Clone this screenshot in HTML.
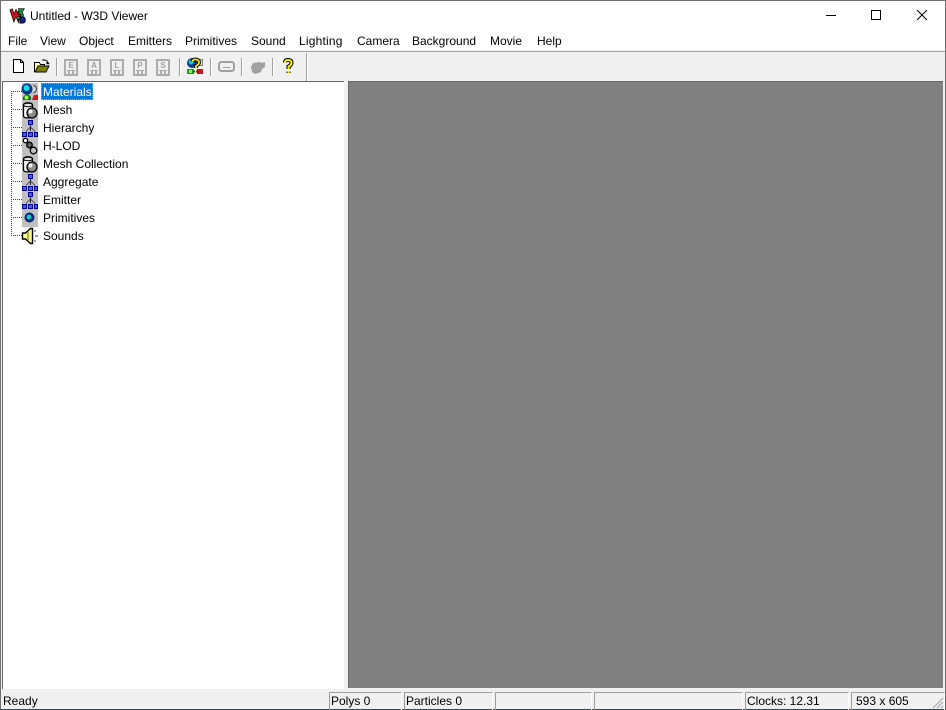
<!DOCTYPE html>
<html><head><meta charset="utf-8"><style>
html,body{margin:0;padding:0;background:#f0f0f0}
body{width:946px;height:710px;position:relative;overflow:hidden;font:12px "Liberation Sans",sans-serif;color:#000}
.a{position:absolute}
.t{position:absolute;white-space:nowrap;line-height:16px}
.sep{position:absolute;top:58px;width:1px;height:18px;background:#a0a0a0;border-right:1px solid #fff}
.p{position:absolute;top:692px;height:17px;border-left:1px solid #a0a0a0;border-top:1px solid #a0a0a0;border-right:1px solid #fff}
</style></head><body>
<div class="a" style="left:0;top:0;width:946px;height:50px;background:#fff"></div>
<div class="a" style="left:0;top:50px;width:946px;height:1px;background:#f0f0f0"></div>
<div class="a" style="left:0;top:51px;width:946px;height:1px;background:#a0a0a0"></div>
<div class="a" style="left:0;top:0;width:946px;height:1px;background:#707070"></div>
<div class="a" style="left:0;top:0;width:1px;height:710px;background:#707070"></div>
<div class="a" style="left:945px;top:0;width:1px;height:710px;background:#707070"></div>
<div class="a" style="left:0;top:709px;width:946px;height:1px;background:#24505f"></div>

<svg class="a" style="left:9px;top:7px" width="18" height="18" viewBox="0 0 18 18">
<path d="M2 2l3 9 2-5 2 5 2-9" fill="none" stroke="#000" stroke-width="3.4"/>
<path d="M2 2l3 9 2-5 2 5 2-9" fill="none" stroke="#d81020" stroke-width="2"/>
<path d="M9 3h4l-2 3c3 0 3 5-1 5H8" fill="none" stroke="#000" stroke-width="3.2"/>
<path d="M9 3h4l-2 3c3 0 3 5-1 5H8" fill="none" stroke="#10a040" stroke-width="1.8"/>
<path d="M11 10h3c3 0 3 6 0 6h-3z" fill="#1020b0" stroke="#000" stroke-width="1"/>
</svg>
<div class="t" style="left:30px;top:8px;color:#000">Untitled - W3D Viewer</div>

<div class="a" style="left:826px;top:15px;width:10px;height:1px;background:#000"></div>
<div class="a" style="left:871px;top:10px;width:8px;height:8px;border:1px solid #000"></div>
<svg class="a" style="left:916px;top:9px" width="12" height="12" viewBox="0 0 12 12"><path d="M1 1l10 10M11 1L1 11" stroke="#000" stroke-width="1" fill="none"/></svg>

<div class="t" style="left:8px;top:33px">File</div>
<div class="t" style="left:40px;top:33px">View</div>
<div class="t" style="left:79px;top:33px">Object</div>
<div class="t" style="left:128px;top:33px">Emitters</div>
<div class="t" style="left:185px;top:33px">Primitives</div>
<div class="t" style="left:251px;top:33px">Sound</div>
<div class="t" style="left:299px;top:33px;letter-spacing:.2px">Lighting</div>
<div class="t" style="left:357px;top:33px">Camera</div>
<div class="t" style="left:412px;top:33px">Background</div>
<div class="t" style="left:490px;top:33px">Movie</div>
<div class="t" style="left:537px;top:33px">Help</div>

<!-- toolbar -->
<svg class="a" style="left:0;top:52px" width="310" height="29" viewBox="0 52 310 29">
<g shape-rendering="crispEdges">
<path d="M13.5 59.5h7l3 3v10h-10z" fill="#fff" stroke="#000"/><path d="M20.5 59.5v3h3" fill="none" stroke="#000"/>
<path d="M34.5 62.5h5l1 2h4v7h-10z" fill="#ffff99" stroke="#000"/>
<path d="M35 72l3-6h11l-3 6z" fill="#808000" stroke="#000" stroke-width=".7"/>
<path d="M42 60h3l2 1 1 2-2 0M47 63l1 1 1-1" fill="none" stroke="#000"/>
<g fill="#f0f0f0" stroke="#acacac" stroke-width="2">
<path d="M65 60h12v15H65z"/><path d="M88 60h12v15H88z"/><path d="M111 60h12v15h-12z"/><path d="M134 60h12v15h-12z"/><path d="M157 60h12v15h-12z"/>
</g>
<g fill="#acacac">
<path d="M67 70h8v1h-8zM68 71h2v3h-2zM72 71h2v3h-2z"/>
<path d="M90 70h8v1h-8zM91 71h2v3h-2zM95 71h2v3h-2z"/>
<path d="M113 70h8v1h-8zM114 71h2v3h-2zM118 71h2v3h-2z"/>
<path d="M136 70h8v1h-8zM137 71h2v3h-2zM141 71h2v3h-2z"/>
<path d="M159 70h8v1h-8zM160 71h2v3h-2zM164 71h2v3h-2z"/>
</g>
</g>
<g font-family="Liberation Sans" font-size="8" font-weight="bold" fill="#a0a0a0" text-anchor="middle">
<text x="71" y="68">E</text><text x="94" y="68">A</text><text x="117" y="68">L</text><text x="140" y="68">P</text><text x="163" y="68">S</text></g>
<circle cx="192" cy="63" r="5" fill="#0a3a90"/><circle cx="191" cy="62" r="2.4" fill="#10d0d0"/>
<path d="M198.500 59.500h4v6h-4z" fill="#e0e0e0" stroke="#808080"/>
<path d="M187 69h7v5h-7z" fill="#10a030"/><path d="M189 70h3v3h-3z" fill="#90f040"/>
<path d="M197 69h6v5h-6z" fill="#d01020"/>
<path d="M192.500 61.500q0-2 3-2q3.500 0 3.500 3q0 2-3 3.500v2M195.500 70.500v2" fill="none" stroke="#000" stroke-width="3.800"/>
<path d="M192.500 61.500q0-2 3-2q3.500 0 3.500 3q0 2-3 3.500v2M195.500 70.500v2" fill="none" stroke="#ffe800" stroke-width="1.800"/>
<rect x="219" y="62" width="15" height="9" rx="2.500" fill="#f0f0f0" stroke="#a0a0a0" stroke-width="2"/><path d="M223 67.500h7" stroke="#a0a0a0"/>
<path d="M253 63l7-1 2 1 3-1v5l-3 2-1 3-6 2-3-2-1-5z" fill="#a0a0a0"/>
<path d="M285 62.500q0-2.500 3-2.500q3.500 0 3.500 3q0 2-3 3.500v2.500M288.500 71.500v1.500" fill="none" stroke="#000" stroke-width="4"/>
<path d="M285 62.500q0-2.500 3-2.500q3.500 0 3.500 3q0 2-3 3.500v2.500M288.500 71.500v1.500" fill="none" stroke="#ffee00" stroke-width="2"/>
</svg>
<div class="sep" style="left:56px"></div>
<div class="sep" style="left:179px"></div>
<div class="sep" style="left:210px"></div>
<div class="sep" style="left:241px"></div>
<div class="sep" style="left:272px"></div>
<div class="a" style="left:306px;top:53px;width:1px;height:28px;background:#a0a0a0;border-right:1px solid #fff"></div>

<!-- panes -->
<div class="a" style="left:2px;top:81px;width:342px;height:1px;background:#696969"></div>
<div class="a" style="left:2px;top:81px;width:1px;height:608px;background:#696969"></div>
<div class="a" style="left:3px;top:82px;width:340px;height:606px;background:#fff"></div>
<div class="a" style="left:3px;top:688px;width:341px;height:1px;background:#fff"></div>
<div class="a" style="left:343px;top:82px;width:1px;height:607px;background:#fff"></div>
<div class="a" style="left:348px;top:81px;width:595px;height:607px;background:#808080;border-top:1px solid #696969;box-sizing:border-box;border-left:1px solid #696969"></div>

<!-- tree -->
<svg class="a" style="left:0;top:82px" width="46" height="166" viewBox="0 82 46 166">
<g shape-rendering="crispEdges">
<path d="M11.500 91V236M11 91.500H22M11 109.500H22M11 127.500H22M11 145.500H22M11 163.500H22M11 181.500H22M11 199.500H22M11 217.500H22M11 235.500H22" stroke="#404040" stroke-dasharray="1 1" fill="none"/>
<rect x="22" y="83" width="16" height="144" fill="#c0c0c0"/>
</g>
<!-- materials -->
<circle cx="27" cy="89" r="5.500" fill="#0a3090"/><circle cx="26.500" cy="88" r="3" fill="#10e0e0"/>
<path d="M33 85.500a3.500 3.500 0 0 1 0 7" fill="#d8d8d8" stroke="#404040"/>
<path d="M33 85.500v7" stroke="#d8d8d8"/>
<path d="M23 100v-3l3-3h2l3 3v3z" fill="#087030"/><circle cx="26.500" cy="97.500" r="2" fill="#a0ff30"/>
<path d="M32 100l2-5h4v5z" fill="#e01018"/>
<!-- mesh cylinders -->
<g>
<path d="M23.500 105c0-3 9-3 9 0v11c0 2.500-9 2.500-9 0z" fill="#fff" stroke="#000" stroke-width="1.300"/><ellipse cx="28" cy="105" rx="4.500" ry="1.800" fill="#e8e8e8" stroke="#000" stroke-width="1"/>
<circle cx="32" cy="113" r="5" fill="#8a8a8a" stroke="#000" stroke-width="1.300"/><circle cx="30.500" cy="111.500" r="2" fill="#f4f4f4"/>
</g>
<g transform="translate(0 54)">
<path d="M23.500 105c0-3 9-3 9 0v11c0 2.500-9 2.500-9 0z" fill="#fff" stroke="#000" stroke-width="1.300"/><ellipse cx="28" cy="105" rx="4.500" ry="1.800" fill="#e8e8e8" stroke="#000" stroke-width="1"/>
<circle cx="32" cy="113" r="5" fill="#8a8a8a" stroke="#000" stroke-width="1.300"/><circle cx="30.500" cy="111.500" r="2" fill="#f4f4f4"/>
</g>
<!-- hierarchy x3 -->
<g shape-rendering="crispEdges">
<g>
<path d="M28 120h5v5h-5z" fill="#000090"/><path d="M29 121h3v3h-3z" fill="#4060e0"/>
<path d="M30.500 125v6M29 128h3M28 129h1M27 130h1M26 131h1M32 129h1M33 130h1M34 131h1" stroke="#222" fill="none"/>
<path d="M22 132h5v5h-5zM28 132h5v5h-5zM34 132h4v5h-4z" fill="#000090"/><path d="M23 133h3v3h-3zM29 133h3v3h-3zM35 133h2v3h-2z" fill="#4060e0"/>
</g>
<g transform="translate(0 54)">
<path d="M28 120h5v5h-5z" fill="#000090"/><path d="M29 121h3v3h-3z" fill="#4060e0"/>
<path d="M30.500 125v6M29 128h3M28 129h1M27 130h1M26 131h1M32 129h1M33 130h1M34 131h1" stroke="#222" fill="none"/>
<path d="M22 132h5v5h-5zM28 132h5v5h-5zM34 132h4v5h-4z" fill="#000090"/><path d="M23 133h3v3h-3zM29 133h3v3h-3zM35 133h2v3h-2z" fill="#4060e0"/>
</g>
<g transform="translate(0 72)">
<path d="M28 120h5v5h-5z" fill="#000090"/><path d="M29 121h3v3h-3z" fill="#4060e0"/>
<path d="M30.500 125v6M29 128h3M28 129h1M27 130h1M26 131h1M32 129h1M33 130h1M34 131h1" stroke="#222" fill="none"/>
<path d="M22 132h5v5h-5zM28 132h5v5h-5zM34 132h4v5h-4z" fill="#000090"/><path d="M23 133h3v3h-3zM29 133h3v3h-3zM35 133h2v3h-2z" fill="#4060e0"/>
</g>
</g>
<!-- hlod -->
<g stroke="#000" stroke-width="1.300"><circle cx="25.500" cy="140.500" r="2.200" fill="#fff"/><circle cx="29.500" cy="145" r="2.800" fill="#606060"/><circle cx="33.500" cy="150.500" r="3.300" fill="#c0c0c0"/></g>
<!-- primitives -->
<circle cx="29.500" cy="217.500" r="5" fill="#0a2a80"/><circle cx="29" cy="217" r="2.400" fill="#10d0c0"/>
<!-- sounds -->
<path d="M22.500 233h3l5-4.500h2v15h-2l-5-4.500h-3z" fill="#ffff90" stroke="#000" stroke-width="1.400"/>
<path d="M28 232v8" stroke="#b0b040" stroke-width="2"/>
<path d="M34 230h2v2h-2zM35 235h3v2h-3zM34 240h2v2h-2z" fill="#a0a0a0"/>
</svg>

<div class="a" style="left:41px;top:83px;width:50px;height:15px;background:#0078d7;border:1px dotted #e8a040"></div>
<div class="t" style="left:43px;top:84px;color:#fff">Materials</div>
<div class="t" style="left:43px;top:102px">Mesh</div>
<div class="t" style="left:43px;top:120px">Hierarchy</div>
<div class="t" style="left:43px;top:138px">H-LOD</div>
<div class="t" style="left:43px;top:156px">Mesh Collection</div>
<div class="t" style="left:43px;top:174px">Aggregate</div>
<div class="t" style="left:43px;top:192px">Emitter</div>
<div class="t" style="left:43px;top:210px">Primitives</div>
<div class="t" style="left:43px;top:228px">Sounds</div>

<!-- status -->
<div class="t" style="left:3px;top:693px">Ready</div>
<div class="p" style="left:329px;width:71px"><div class="t" style="left:1px;top:0">Polys 0</div></div>
<div class="p" style="left:404px;width:87px"><div class="t" style="left:1px;top:0">Particles 0</div></div>
<div class="p" style="left:495px;width:95px"></div>
<div class="p" style="left:594px;width:147px"></div>
<div class="p" style="left:745px;width:102px"><div class="t" style="left:1px;top:0">Clocks: 12.31</div></div>
<div class="p" style="left:851px;width:92px"><div class="t" style="left:4px;top:0">593 x 605</div></div>
<svg class="a" style="left:932px;top:697px" width="12" height="12"><path d="M11 1L1 11M11 5L5 11M11 9L9 11" stroke="#a0a0a0" fill="none"/></svg>
</body></html>
